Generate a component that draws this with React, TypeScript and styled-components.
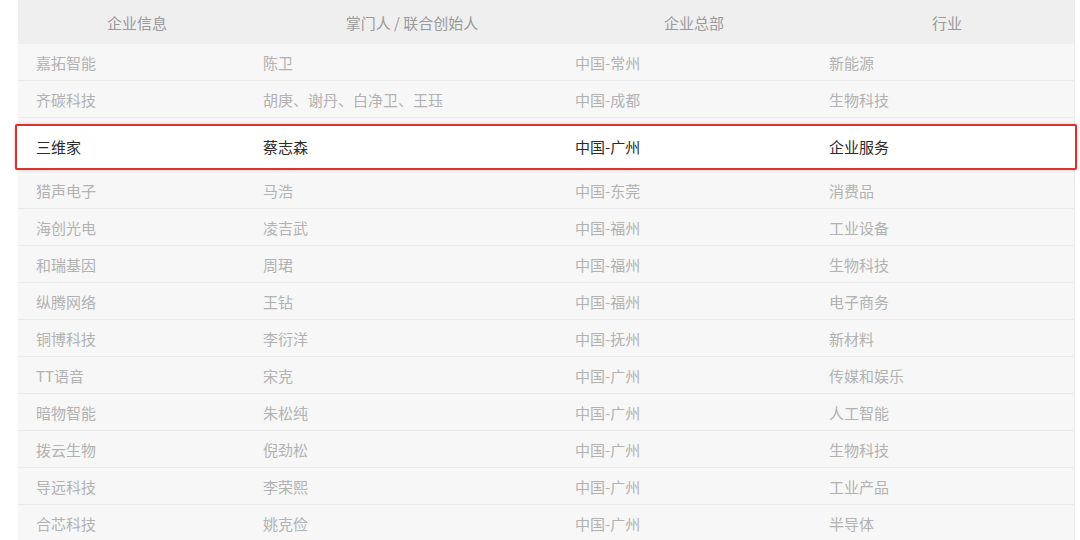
import React from "react";
import styled, { createGlobalStyle } from "styled-components";

type Company = {
  name: string
  founders: string
  hq: string
  industry: string
  highlight?: boolean
}

const companies: Company[] = [
  { name: "嘉拓智能", founders: "陈卫", hq: "中国-常州", industry: "新能源" },
  { name: "齐碳科技", founders: "胡庚、谢丹、白净卫、王珏", hq: "中国-成都", industry: "生物科技" },
  { name: "三维家", founders: "蔡志森", hq: "中国-广州", industry: "企业服务", highlight: true },
  { name: "猎声电子", founders: "马浩", hq: "中国-东莞", industry: "消费品" },
  { name: "海创光电", founders: "凌吉武", hq: "中国-福州", industry: "工业设备" },
  { name: "和瑞基因", founders: "周珺", hq: "中国-福州", industry: "生物科技" },
  { name: "纵腾网络", founders: "王钻", hq: "中国-福州", industry: "电子商务" },
  { name: "铜博科技", founders: "李衍洋", hq: "中国-抚州", industry: "新材料" },
  { name: "TT语音", founders: "宋克", hq: "中国-广州", industry: "传媒和娱乐" },
  { name: "暗物智能", founders: "朱松纯", hq: "中国-广州", industry: "人工智能" },
  { name: "拨云生物", founders: "倪劲松", hq: "中国-广州", industry: "生物科技" },
  { name: "导远科技", founders: "李荣熙", hq: "中国-广州", industry: "工业产品" },
  { name: "合芯科技", founders: "姚克俭", hq: "中国-广州", industry: "半导体" },
];

const GlobalStyle = createGlobalStyle`
  html, body {
    margin: 0;
    padding: 0;
    background: #ffffff;
    overflow: hidden;
  }
  body {
    font-family: "Noto Sans CJK SC", "Noto Sans", "Liberation Sans", sans-serif;
  }
`;

const Page = styled.div`
  width: 1080px;
  height: 540px;
  padding-left: 18px;
  box-sizing: border-box;
`;

const Table = styled.div`
  width: 1056px;
  border-right: 1px solid #ebebeb;
  background: #f7f7f7;
`;

const HeaderRow = styled.div`
  display: grid;
  grid-template-columns: 238px 312px 252px 1fr;
  height: 44px;
  align-items: center;
  background: #efefef;
`;

const HeaderCell = styled.div`
  text-align: center;
  font-size: 15px;
  color: #9a9a9a;
`;

type RowProps = { $highlight?: boolean }

const Row = styled.div<RowProps>`
  display: grid;
  grid-template-columns: 227px 312px 254px 1fr;
  align-items: center;
  box-sizing: border-box;
  height: 37px;
  border-bottom: 1px solid #ebebeb;
  font-size: 15px;
  color: #b2b2b2;

  ${(props) => props.$highlight ? `
    height: 46px;
    margin: 6px -3px 2px -3px;
    padding: 0 0 1px 1px;
    background: #ffffff;
    color: #2b2b2b;
    border: 2px solid #d9332d;
    border-radius: 2px;
    box-shadow: 0 0 3px rgba(217, 51, 45, 0.35);
  ` : ``}
`;

const Cell = styled.div`
  padding-left: 18px;
  white-space: nowrap;
`;

export default function App() {
  return <Page>
    <GlobalStyle />
    <Table>
      <HeaderRow>
        <HeaderCell>企业信息</HeaderCell>
        <HeaderCell>掌门人 / 联合创始人</HeaderCell>
        <HeaderCell>企业总部</HeaderCell>
        <HeaderCell>行业</HeaderCell>
      </HeaderRow>
      {companies.map((c) => <Row key={c.name} $highlight={c.highlight}>
        <Cell>{c.name}</Cell>
        <Cell>{c.founders}</Cell>
        <Cell>{c.hq}</Cell>
        <Cell>{c.industry}</Cell>
      </Row>)}
    </Table>
  </Page>
}
